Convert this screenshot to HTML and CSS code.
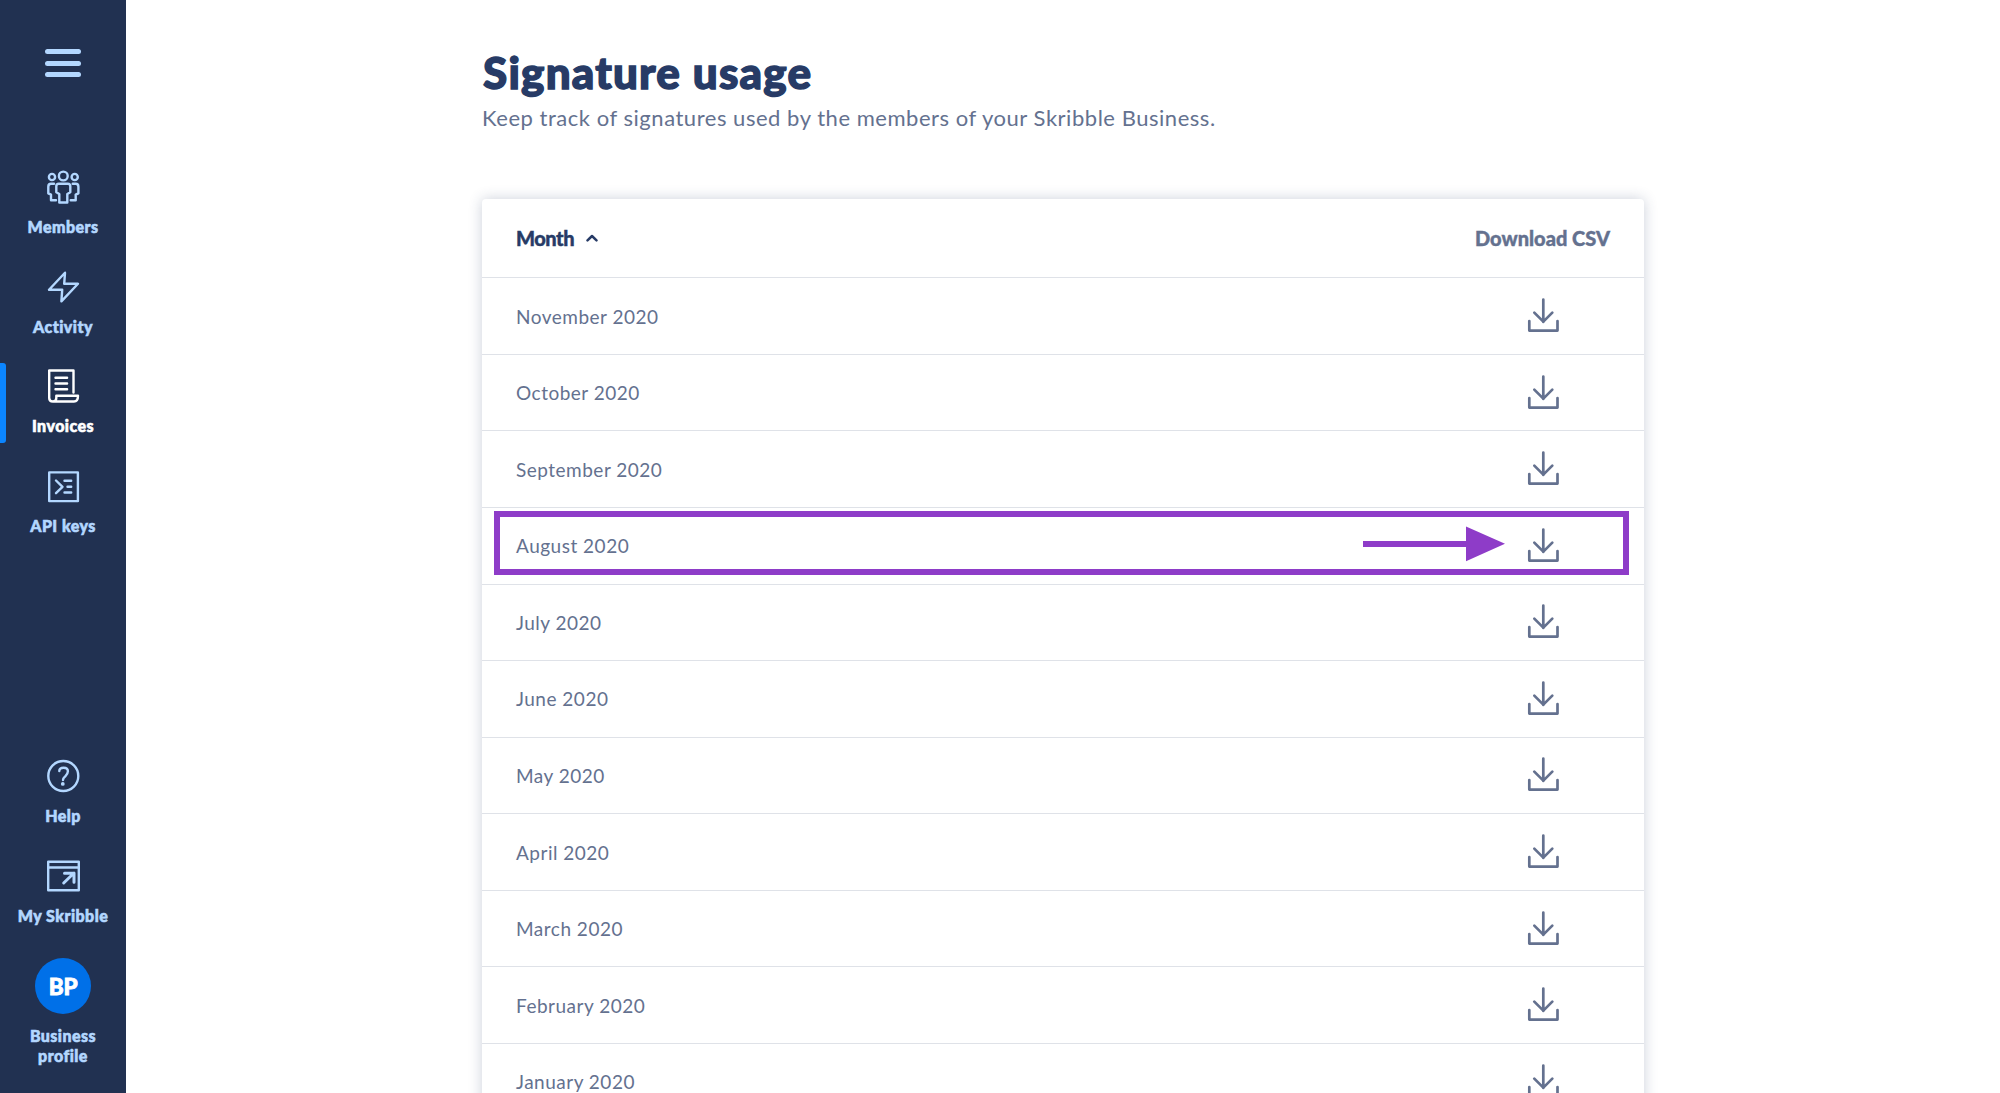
FILE: index.html
```html
<!DOCTYPE html>
<html lang="en">
<head>
<meta charset="utf-8">
<title>Signature usage</title>
<link rel="stylesheet" href="styles.css">
</head>
<body>
<svg class="sprite" aria-hidden="true">
  <symbol id="download" viewBox="0 0 32 34"><path d="M16.3 1.5V24M7.3 14.6l9 9 9-9M2.3 23v9.6h28.2V23"/></symbol>
</svg>
<div class="app">
  <aside class="sidebar">
    <div class="burger"><span></span><span></span><span></span></div>
    <nav class="nav">
      <a class="item"><svg class="icon" viewBox="0 0 36 36"><circle cx="18.3" cy="7" r="4.4"/><circle cx="7" cy="8" r="3.1"/><circle cx="29.7" cy="8" r="3.1"/><path d="M14.3 33.5V25l-3-1.7v-6q0-2.5 2.5-2.5h9q2.5 0 2.5 2.5v6l-3 1.7v8.5zM9 14.8H6q-2.7 0-2.7 3v6.5l2.7 1.3v5.7h5M27.700 14.800h3q2.700 0 2.700 3v6.500l-2.700 1.300v5.700h-5"/></svg><span class="label">Members</span></a>
      <a class="item"><svg class="icon" viewBox="0 0 36 36"><path d="M20 3.800 4 20.800h13.200l-.8 11.600L33 14.800H19.200z"/></svg><span class="label">Activity</span></a>
      <a class="item active"><svg class="icon" viewBox="0 0 36 36"><path d="M28.500 24.500V2.500H4.200V30q0 3.500 3.700 3.500H29q4 0 4-5.700H11.300V30q0 3.500-3.400 3.500M10.500 9.700h11.600M10.500 15.500h11.600M10.500 21.300h11.600"/></svg><span class="label">Invoices</span></a>
      <a class="item"><svg class="icon" viewBox="0 0 36 36"><path d="M4.200 4.400h28.700v28.700H4.200zM11 12.500l6.500 6.300L11 25.200M19.500 12.700h6.700M22.500 18.700h3.700M19.500 24.500h6.700"/></svg><span class="label">API keys</span></a>
    </nav>
    <nav class="nav bottom">
      <a class="item"><svg class="icon" viewBox="0 0 36 36"><circle cx="18.300" cy="18" r="15"/><path d="M14.300 13q0-3.300 4.300-3.300t4.300 3.600c0 2.300-1 3.500-2.600 5s-2.300 2-2.300 3.700"/><circle class="dot" cx="17.800" cy="25.900" r="1.900"/></svg><span class="label">Help</span></a>
      <a class="item"><svg class="icon" viewBox="0 0 36 36"><path d="M3.200 3.800h30.600v28.500H3.200zM3.200 9.500h30.600"/><path class="thick" d="M18.700 25 29 15M19.500 15.200H29v9"/></svg><span class="label">My Skribble</span></a>
      <a class="item profile"><span class="avatar">BP</span><span class="label">Business<br>profile</span></a>
    </nav>
  </aside>
  <main class="main">
    <div class="content">
      <h1 class="title">Signature usage</h1>
      <p class="subtitle">Keep track of signatures used by the members of your Skribble Business.</p>
      <section class="card">
        <header class="row head"><span class="sort">Month<svg class="chevron" viewBox="0 0 12 8"><path d="M1.500 6.300 6 2l4.500 4.300"/></svg></span><span class="csv">Download CSV</span></header>
        <div class="row"><span class="month">November 2020</span><svg class="download"><use href="#download"/></svg></div>
        <div class="row"><span class="month">October 2020</span><svg class="download"><use href="#download"/></svg></div>
        <div class="row"><span class="month">September 2020</span><svg class="download"><use href="#download"/></svg></div>
        <div class="row"><span class="month">August 2020</span><svg class="download"><use href="#download"/></svg>
          <div class="highlight"><svg class="arrow" viewBox="0 0 142 36"><path d="M0 15h103V.500l39 17.300-39 17.500V21H0z"/></svg></div></div>
        <div class="row"><span class="month">July 2020</span><svg class="download"><use href="#download"/></svg></div>
        <div class="row"><span class="month">June 2020</span><svg class="download"><use href="#download"/></svg></div>
        <div class="row"><span class="month">May 2020</span><svg class="download"><use href="#download"/></svg></div>
        <div class="row"><span class="month">April 2020</span><svg class="download"><use href="#download"/></svg></div>
        <div class="row"><span class="month">March 2020</span><svg class="download"><use href="#download"/></svg></div>
        <div class="row"><span class="month">February 2020</span><svg class="download"><use href="#download"/></svg></div>
        <div class="row"><span class="month">January 2020</span><svg class="download"><use href="#download"/></svg></div>
      </section>
    </div>
  </main>
</div>
</body>
</html>
```
FILE: styles.css
```css
* { box-sizing: border-box; }
body { margin: 0; height: 100vh; overflow: hidden; background: #fff; color: #64718f; font-family: Lato, "Open Sans", sans-serif; }
.sprite { position: absolute; width: 0; height: 0; }
.app { display: flex; height: 100vh; }
svg { fill: none; stroke: currentColor; stroke-linecap: round; stroke-linejoin: round; }

.sidebar { width: 126px; flex: none; display: flex; flex-direction: column; padding-top: 49px; background: #213151; color: #b3d7ff; }
.burger { width: 36px; height: 28px; margin: 0 auto 87px; display: flex; flex-direction: column; justify-content: space-between; }
.burger span { height: 5px; border-radius: 2.5px; background: currentColor; }
.nav { display: flex; flex-direction: column; gap: 19.5px; }
.nav.bottom { margin-top: auto; height: 340px; }
.item { flex: none; height: 80px; padding-top: 5px; display: flex; flex-direction: column; align-items: center; gap: 12px; }
.item.active { position: relative; color: #fff; }
.item.active::before { content: ""; position: absolute; left: 0; top: 0; width: 6px; height: 100%; border-radius: 0 3px 3px 0; background: #0b85ff; }
.icon { width: 36px; height: 36px; stroke-width: 2.4; }
.thick { stroke-width: 3; }
.dot { fill: currentColor; stroke: none; }
.label { font-size: 16px; line-height: 19.5px; font-weight: 900; letter-spacing: .45px; -webkit-text-stroke: .6px; text-align: center; white-space: nowrap; }
.profile { height: auto; padding-top: 6px; }
.avatar { width: 56px; height: 56px; border-radius: 50%; background: #0070e8; color: #fff; font-size: 22.5px; font-weight: 900; letter-spacing: -.3px; -webkit-text-stroke: .8px; line-height: 57px; text-align: center; }

.main { flex: 1; display: flex; justify-content: center; }
.content { width: 1162px; padding-top: 45px; }
.title { margin: 0 0 0 1px; font-size: 44px; line-height: 54px; font-weight: 900; letter-spacing: 1.2px; -webkit-text-stroke: 1.4px; color: #273b66; }
.subtitle { margin: 4px 0 0; font-size: 22px; line-height: 30px; letter-spacing: .53px; }
.card { margin-top: 66px; border-radius: 4px; background: #fff; box-shadow: 0 0 14px rgba(39, 59, 102, .24); }
.row { position: relative; height: 76.57px; padding: 0 34px 1px; display: flex; align-items: center; justify-content: space-between; border-top: 1px solid #dfe2e8; }
.head { height: 78.3px; padding-bottom: 0; border-top: 0; font-size: 20px; font-weight: 900; -webkit-text-stroke: .4px; }
.sort { display: flex; align-items: center; gap: 12px; letter-spacing: -.45px; color: #273b66; }
.chevron { width: 12px; height: 8px; stroke-width: 2.5; }
.month { font-size: 19px; line-height: 24px; padding-top: 2px; letter-spacing: .5px; }
.download { width: 32px; height: 34px; margin: 0 51px 1px 0; stroke-width: 2.7; }
.highlight { position: absolute; left: 12px; top: 3px; width: 1135px; height: 64px; border: 6px solid #8e3cc8; }
.arrow { position: absolute; left: 863px; top: 9px; width: 142px; height: 36px; fill: #8e3cc8; stroke: none; }
```
